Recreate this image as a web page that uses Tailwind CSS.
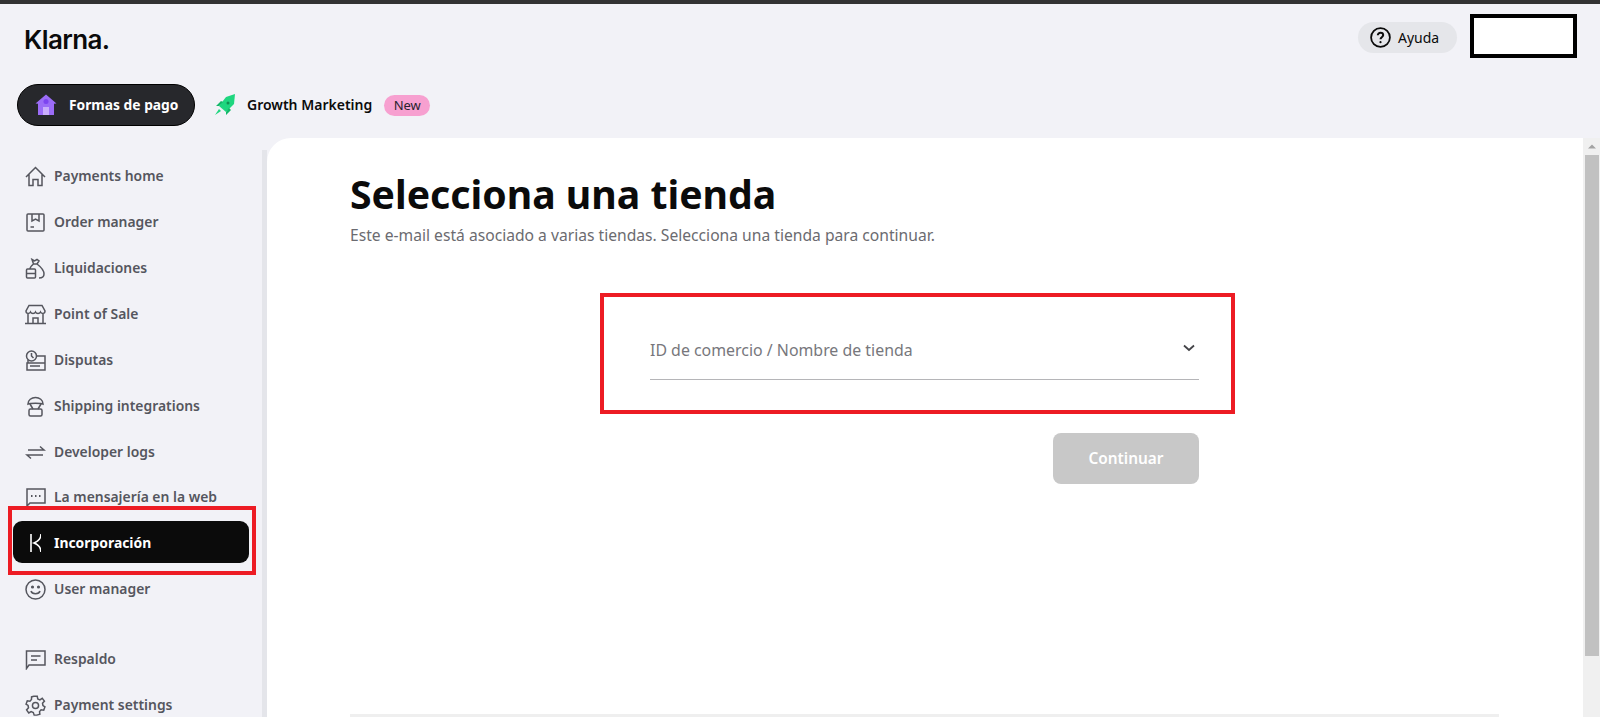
<!DOCTYPE html>
<html lang="es">
<head>
  <meta charset="UTF-8">
  <title>Klarna - Selecciona una tienda</title>
  <script src="https://cdn.jsdelivr.net/npm/@tailwindcss/browser@4"></script>
</head>
<body class="h-[717px] overflow-hidden bg-[#f2f2f7] font-['Noto_Sans','Open_Sans',sans-serif] text-[#0b0b0b]">
  <!-- top strip -->
  <div class="h-1 bg-[#333333]"></div>

  <!-- header -->
  <header class="h-[73px] flex items-start justify-between pl-[24px] pr-[23px]">
    <span class="mt-[18px] font-['Inter',sans-serif] text-[26px] leading-[36px] font-semibold tracking-[-0.6px] text-[#0b0b0b]">Klarna.</span>
    <div class="flex items-start gap-[13px] mt-[10px]">
      <button class="mt-[8px] w-[99px] h-[31px] rounded-full bg-[#e5e6ea] flex items-center pl-[12px] gap-[7px] text-sm text-[#0b0b0b]">
        <svg class="w-[21px] h-[21px]" viewBox="0 0 21 21" fill="none" stroke="#0b0b0b" stroke-width="1.8">
          <circle cx="10.5" cy="10.5" r="9.4"/>
          <path d="M7.8 8.3c0-1.6 1.2-2.6 2.7-2.6s2.7 1 2.7 2.4c0 2.1-2.7 2.1-2.7 4.1" stroke-width="2"/>
          <circle cx="10.5" cy="15.2" r="1.1" fill="#0b0b0b" stroke="none"/>
        </svg>
        Ayuda
      </button>
      <div class="w-[107px] h-[44px] bg-white border-4 border-black"></div>
    </div>
  </header>

  <!-- product tabs -->
  <nav class="h-[61px] flex items-start pl-[17px]">
    <a class="mt-[7px] w-[178px] h-[42px] rounded-full bg-[#27282c] border border-black flex items-center pl-[17px] gap-[12px] text-[13.8px] font-bold text-white">
      <svg class="w-[22px] h-[22px]" viewBox="0 0 22 22">
        <path d="M11 .5 21.5 9.5 19 9.8V21H3V9.8L.5 9.5z" fill="#9b6cf7"/>
        <rect x="8" y="13" width="6" height="8" fill="#c9aefc"/>
        <circle cx="11" cy="7.5" r="2.5" fill="#7d45f0"/>
      </svg>
      Formas de pago
    </a>
    <a class="mt-[7px] ml-[19px] h-[42px] flex items-center text-sm font-semibold text-[#0b0b0b]">
      <svg class="w-[22px] h-[24px] mr-[11px]" viewBox="0 0 22 24">
        <path d="M21 1 20 11 12 19 5 13 12 4z" fill="#1fd67f"/>
        <path d="M5 13 2 13 7 8 9 9zM12 19V22L17 17 15 15z" fill="#12b868"/>
        <path d="M5 16 7 18 1 22z" fill="#1fd67f"/>
        <circle cx="14" cy="10" r="1.5" fill="#0f8f52"/>
      </svg>
      Growth Marketing
      <span class="ml-[12px] w-[46px] h-[21px] rounded-full bg-[#f7a0d0] flex items-center justify-center text-[13px] font-normal text-[#27242e]">New</span>
    </a>
  </nav>

  <div class="flex h-[579px]">
    <!-- sidebar -->
    <aside class="relative w-[262px] shrink-0 pt-[15px] text-[13.9px] font-semibold text-[#55565e]">
      <ul class="pl-[13px] w-[249px]">
        <li class="h-[46px] flex items-center pl-[12px] gap-[8px]">
          <svg class="w-[21px] h-[21px]" viewBox="0 0 21 21" fill="none" stroke="#55565e" stroke-width="1.5"><path d="M1 11 10.500 1.500 20 11M4 8.500V19.500H8V13.500H13V19.500H17V8.500"/></svg>
          Payments home
        </li>
        <li class="h-[46px] flex items-center pl-[12px] gap-[8px]">
          <svg class="w-[21px] h-[21px]" viewBox="0 0 21 21" fill="none" stroke="#55565e" stroke-width="1.5"><rect x="2" y="2" width="17" height="17" rx="1"/><path d="M7 2V9L10.500 7 14 9V2M5.500 15H9"/></svg>
          Order manager
        </li>
        <li class="h-[46px] flex items-center pl-[12px] gap-[8px]">
          <svg class="w-[21px] h-[21px]" viewBox="0 0 21 21" fill="none" stroke="#55565e" stroke-width="1.5"><path d="M7 1.500 9.500 3 12 1.500 14 3 12 6H8.500zM8.500 6C6 8 5 9.500 5 11M12 6C16 9 19 13 19 16 19 19 17 20 14 20"/><rect x="1.500" y="11" width="9" height="9" rx="1"/><path d="M1.500 15.500H10.500"/></svg>
          Liquidaciones
        </li>
        <li class="h-[46px] flex items-center pl-[12px] gap-[8px]">
          <svg class="w-[21px] h-[21px]" viewBox="0 0 21 21" fill="none" stroke="#55565e" stroke-width="1.5"><path d="M4 1.500H17L20 7C20 10 16.500 10 15.500 8 14.500 10 11.500 10 10.500 8 9.500 10 6.500 10 5.500 8 4.500 10 1 10 1 7zM3 9.500V19.500M18 9.500V19.500M0 19.500H21M8 19.500V14H13V19.500"/></svg>
          Point of Sale
        </li>
        <li class="h-[46px] flex items-center pl-[12px] gap-[8px]">
          <svg class="w-[21px] h-[21px]" viewBox="0 0 21 21" fill="none" stroke="#55565e" stroke-width="1.5"><circle cx="6.500" cy="6" r="5"/><path d="M6.500 3V6L8.500 8M11.500 6H20V13H3V10M2 13H20V20H2zM5 16H15"/></svg>
          Disputas
        </li>
        <li class="h-[46px] flex items-center pl-[12px] gap-[8px]">
          <svg class="w-[21px] h-[21px]" viewBox="0 0 21 21" fill="none" stroke="#55565e" stroke-width="1.5"><path d="M3 8C3 4 6.500 1.500 10.500 1.500S18 4 18 8C16 7 5 7 3 8zM5 8 8 13M16 8 13 13"/><rect x="4" y="13" width="13" height="7" rx="1.500"/></svg>
          Shipping integrations
        </li>
        <li class="h-[46px] flex items-center pl-[12px] gap-[8px]">
          <svg class="w-[21px] h-[21px]" viewBox="0 0 21 21" fill="none" stroke="#55565e" stroke-width="1.5"><path d="M3 8H19L15 4.500M18 13H2L6 16.500"/></svg>
          Developer logs
        </li>
        <li class="h-[44px] flex items-center pl-[12px] gap-[8px]">
          <svg class="w-[21px] h-[21px]" viewBox="0 0 21 21" fill="none" stroke="#55565e" stroke-width="1.500"><path d="M2 2H20V16H5L2 19z"/><path d="M6 9H7.500M10 9H11.500M14 9H15.500" stroke-width="2"/></svg>
          La mensajería en la web
        </li>
        <li class="h-[42px] mt-[2px] mb-[3px] pt-[2px] rounded-[9px] bg-[#0b0b0b] flex items-center pl-[17px] gap-[13px] text-white font-bold">
          <svg class="w-[11px] h-[18px]" viewBox="0 0 11 18" fill="none" stroke="#ffffff" stroke-width="1.600"><path d="M1 0V18M11 0C11 4 9 7 4 9 9 11 11 14 11 18"/></svg>
          Incorporación
        </li>
        <li class="h-[46px] flex items-center pl-[12px] gap-[8px]">
          <svg class="w-[21px] h-[21px]" viewBox="0 0 21 21" fill="none" stroke="#55565e" stroke-width="1.500"><circle cx="10.500" cy="10.500" r="9.500"/><path d="M6 12C7 15.500 14 15.500 15 12"/><circle cx="7.500" cy="8" r=".8" fill="#55565e"/><circle cx="13.500" cy="8" r=".8" fill="#55565e"/></svg>
          User manager
        </li>
        <li class="h-[46px] mt-[24px] flex items-center pl-[12px] gap-[8px]">
          <svg class="w-[21px] h-[21px]" viewBox="0 0 21 21" fill="none" stroke="#55565e" stroke-width="1.500"><path d="M1.500 2H20V16H4L1.500 19.500z"/><path d="M6 7H15.500M6 11H12"/></svg>
          Respaldo
        </li>
        <li class="h-[46px] flex items-center pl-[12px] gap-[8px]">
          <svg class="w-[21px] h-[21px]" viewBox="0 0 24 24" fill="none" stroke="#55565e" stroke-width="1.700"><circle cx="12" cy="12" r="3.500"/><path d="M10 1.500H14L14.600 4.600 17 5.600 19.700 3.800 22.200 7 20 9.300 20.500 12 22.800 13.600 21.400 17.300 18.400 16.900 16.600 19 17 22 13.500 23H10.500L9.500 20 7 19 4.300 20.500 1.800 17 4 14.700 3.500 12 1.200 10.400 2.600 6.700 5.600 7.100 7.400 5 7.500 2.200z"/></svg>
          Payment settings
        </li>
      </ul>
      <!-- annotation around the active item -->
      <div class="absolute left-[8px] top-[368px] w-[248px] h-[69px] border-4 border-[#ed1c24] pointer-events-none"></div>
    </aside>

    <!-- separator -->
    <div class="w-[5px] mt-[12px] bg-[#e4e5ea]"></div>

    <!-- main panel -->
    <main class="w-[1316px] bg-white rounded-tl-[24px] pl-[83px] relative">
      <h1 class="mt-[29px] text-[39.2px] leading-[54px] font-bold text-[#0b0b0b]">Selecciona una tienda</h1>
      <p class="mt-[4px] text-[15.65px] leading-[20px] text-[#6b6b70]">Este e-mail está asociado a varias tiendas. Selecciona una tienda para continuar.</p>

      <div class="mt-[48px] ml-[250px] w-[635px] h-[121px] border-4 border-[#ed1c24] pl-[46px] pr-[32px]">
        <div class="mt-[31px] h-[52px] flex items-center justify-between border-b border-[#b5b5b8] pb-[5px]">
          <span class="text-[15.9px] text-[#77777c]">ID de comercio / Nombre de tienda</span>
          <svg class="w-[12px] h-[8px] mr-[4px] mb-[6px]" viewBox="0 0 12 8" fill="none" stroke="#444448" stroke-width="1.800"><path d="M1 1.500 6 6 11 1.500"/></svg>
        </div>
      </div>

      <div class="mt-[19px] ml-[703px] w-[146px] h-[51px] pt-[1px] rounded-[8px] bg-[#c8c8c8] flex items-center justify-center text-[15.4px] font-semibold text-white">Continuar</div>

      <div class="absolute left-[83px] bottom-0 w-[1149px] h-[3px] bg-[#efefef]"></div>
    </main>

    <!-- scrollbar -->
    <div class="flex-1 bg-[#f0f0f0] flex flex-col items-center">
      <svg class="w-[16px] h-[17px] shrink-0" viewBox="0 0 16 17"><path d="M4 10.500 8 6.500 12 10.500z" fill="#a3a3a3"/></svg>
      <div class="w-[14px] h-[501px] bg-[#c1c1c1]"></div>
    </div>
  </div>
</body>
</html>
